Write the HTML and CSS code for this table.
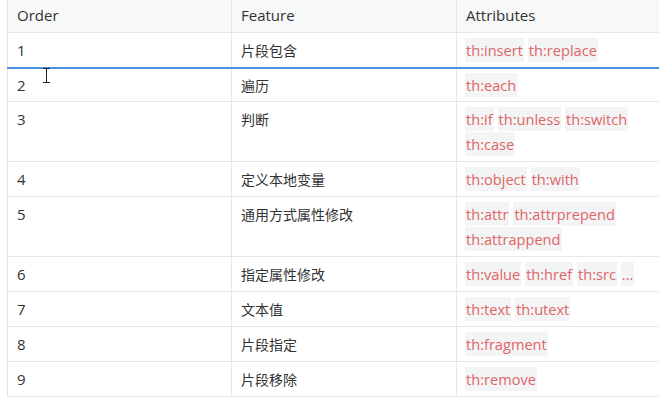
FILE: index.html
```html
<!DOCTYPE html>
<html lang="en">
<head>
    <meta charset="UTF-8">
    <title>Thymeleaf Attributes</title>
    <link rel="stylesheet" href="styles.css">
</head>
<body>
    <div class="sheet">
        <table class="attr-table">
            <thead>
                <tr><th>Order</th><th>Feature</th><th>Attributes</th></tr>
            </thead>
            <tbody>
                <tr><td>1</td><td>片段包含</td><td><code>th:insert</code> <code>th:replace</code></td></tr>
                <tr class="drop-mark"><td>2<span class="caret"></span></td><td>遍历</td><td><code>th:each</code></td></tr>
                <tr><td>3</td><td>判断</td><td><code>th:if</code> <code>th:unless</code> <code>th:switch</code> <code>th:case</code></td></tr>
                <tr><td>4</td><td>定义本地变量</td><td><code>th:object</code> <code>th:with</code></td></tr>
                <tr><td>5</td><td>通用方式属性修改</td><td><code>th:attr</code> <code>th:attrprepend</code> <code>th:attrappend</code></td></tr>
                <tr><td>6</td><td>指定属性修改</td><td><code>th:value</code> <code>th:href</code> <code>th:src</code> <code>...</code></td></tr>
                <tr><td>7</td><td>文本值</td><td><code>th:text</code> <code>th:utext</code></td></tr>
                <tr><td>8</td><td>片段指定</td><td><code>th:fragment</code></td></tr>
                <tr><td>9</td><td>片段移除</td><td><code>th:remove</code></td></tr>
            </tbody>
        </table>
    </div>
</body>
</html>
```

FILE: styles.css
```css
body { margin: 0; background: #fff; overflow: hidden; font-family: "Open Sans", "Noto Sans CJK SC", sans-serif; color: #333; }
.sheet { margin: -3px 0 0 7px; }
.attr-table { border-collapse: collapse; table-layout: fixed; width: 660px; font-size: 15px; }
.attr-table th, .attr-table td { box-sizing: border-box; border: 1px solid #e4e6e8; padding: 5px 8px 4px 9px; line-height: 25px; text-align: left; vertical-align: top; }
.attr-table th { font-weight: normal; background: #f7f8f8; }
.attr-table th:nth-child(1) { width: 224px; }
.attr-table th:nth-child(2) { width: 225px; }
.attr-table td:nth-child(2) { font-size: 14px; }
.attr-table td:nth-child(3) { padding-left: 8px; }
.attr-table tbody td:first-child { position: relative; }
.drop-mark td { border-top: 2px solid #4a90e2; padding-top: 4px; padding-bottom: 3px; }
.attr-table code { font-family: inherit; font-size: 14.6px; color: #e06664; background: #f3f4f6; padding: 2px 1px; }
.caret { position: absolute; left: 38px; top: -1px; width: 1px; height: 15px; background: #222; }
.caret::before, .caret::after { content: ""; position: absolute; left: -3px; width: 7px; height: 1px; background: #222; }
.caret::before { top: 0; }
.caret::after { bottom: 0; }
```
